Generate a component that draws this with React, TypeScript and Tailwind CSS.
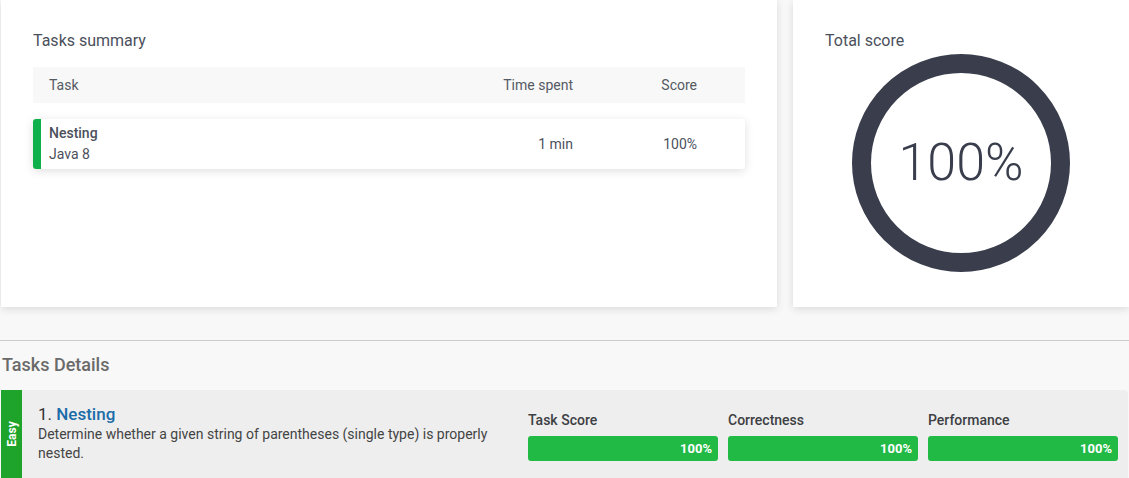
const font = { fontFamily: 'Roboto, "Liberation Sans", sans-serif' };

// =============================================================================
// TOP CARDS
// =============================================================================

function TasksSummary() {
  return (
    <div className="w-[776px] h-[307px] bg-white shadow-[0_2px_8px_rgba(0,0,0,0.12)] px-8 pt-[29px]">
      <h2 className="text-[16px] leading-6 text-[#4b505c]">Tasks summary</h2>

      {/* En-tête du tableau */}
      <div className="mt-[14px] h-9 bg-[#f8f8f8] flex items-center text-[14px] text-[#555a63]">
        <div className="flex-1 pl-4">Task</div>
        <div className="w-[120px] text-right">Time spent</div>
        <div className="w-[172px] text-right pr-12">Score</div>
      </div>

      {/* Ligne de tâche */}
      <div className="mt-4 h-[50px] flex items-center bg-white rounded-[3px] shadow-[0_2px_10px_rgba(0,0,0,0.13)] text-[14px] text-[#4b505c]">
        <div className="w-2 h-full bg-[#0db04b] rounded-l-[3px]" />
        <div className="flex-1 pl-2 leading-[21px]">
          <div className="font-medium">Nesting</div>
          <div>Java 8</div>
        </div>
        <div className="w-[120px] text-right">1 min</div>
        <div className="w-[172px] text-right pr-12">100%</div>
      </div>
    </div>
  );
}

function TotalScore() {
  return (
    <div className="flex-1 h-[307px] bg-white shadow-[0_2px_8px_rgba(0,0,0,0.12)] px-8 pt-[29px]">
      <h2 className="text-[16px] leading-6 text-[#4b505c]">Total score</h2>
      <div className="relative w-[218px] h-[218px] mx-auto mt-[1px]">
        <svg width="218" height="218" viewBox="0 0 218 218">
          <circle cx="109" cy="109" r="99.5" fill="none" stroke="#393d4c" strokeWidth="19" />
        </svg>
        <div className="absolute inset-0 flex items-center justify-center text-[52px] font-light text-[#393d4c]">
          100%
        </div>
      </div>
    </div>
  );
}

// =============================================================================
// TASK DETAILS
// =============================================================================

function ScoreBar({ label }: { label: string }) {
  return (
    <div className="w-[190px] pt-[20px]">
      <div className="text-[14px] font-medium leading-5 text-[#3d3f44]">{label}</div>
      <div className="mt-[6px] h-[25px] rounded-[3px] bg-[#21ba45] flex items-center justify-end pr-[6px] text-[13px] font-bold text-white">
        100%
      </div>
    </div>
  );
}

export default function App() {
  return (
    <div className="w-[1129px] h-[478px] overflow-hidden bg-[#f8f8f8]" style={font}>
      <div className="flex gap-4 pl-px">
        <TasksSummary />
        <TotalScore />
      </div>

      <div className="mt-[33px] border-t border-[#cccccc]" />
      <h3 className="pl-[2px] pt-3 pb-[13px] text-[18px] leading-6 font-medium text-[#6a6a6a]">Tasks Details</h3>

      <div className="ml-px mr-[1px] h-[88px] bg-[#eeeeee] rounded-tr-[4px] flex">
        <div className="w-[21px] bg-[#1fa42b] flex items-center justify-center">
          <span className="-rotate-90 text-[12px] font-bold text-white">Easy</span>
        </div>
        <div className="flex-1 pl-4 pr-4 pt-[13px]">
          <div className="text-[17px] leading-[22px] text-[#333]">
            1. <span className="font-medium text-[#1b6ca8]">Nesting</span>
          </div>
          <div className="text-[14px] leading-[19px] text-[#444]">
            Determine whether a given string of parentheses (single type) is properly nested.
          </div>
        </div>
        <div className="flex gap-[10px] pr-[10px]">
          <ScoreBar label="Task Score" />
          <ScoreBar label="Correctness" />
          <ScoreBar label="Performance" />
        </div>
      </div>
    </div>
  );
}
